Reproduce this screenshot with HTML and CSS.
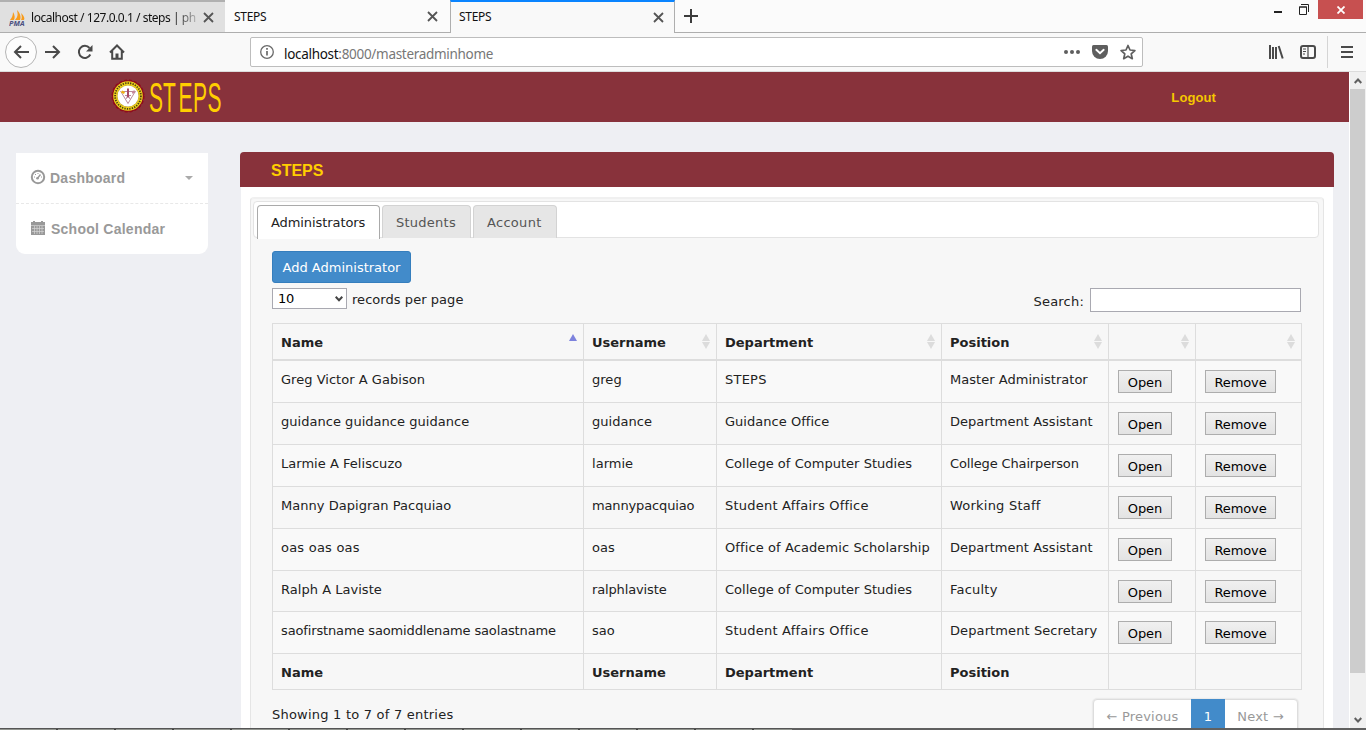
FILE: index.html
```
<!DOCTYPE html>
<html lang="en">
<head>
<meta charset="utf-8">
<title>STEPS</title>
<link rel="stylesheet" href="styles.css">
</head>
<body>
<div class="window">
  <div class="tabstrip">
    <div class="tab tab-pma">
      <svg class="favicon" width="16" height="16" viewBox="0 0 16 16"><path d="M1 10C3 8 4 5 4 2c2 3 2 6 1 8zM6 10c3-3 3-6 2-10 4 4 4 8 3 10zM12 10c1-2 1-4 0-7 3 3 4 5 3 7z" fill="#f89c1c"/><text x="0" y="15.500" font-size="6.500" textLength="15.500" lengthAdjust="spacingAndGlyphs" font-weight="bold" font-style="italic" fill="#4a5080">PMA</text></svg>
      <span class="tab-title faded">localhost / 127.0.0.1 / steps | ph</span>
      <svg class="x" width="11" height="11" viewBox="0 0 11 11"><path d="M1 1l9 9M10 1l-9 9"/></svg>
    </div>
    <div class="tab"><span class="tab-title">STEPS</span><svg class="x" width="11" height="11" viewBox="0 0 11 11"><path d="M1 1l9 9M10 1l-9 9"/></svg></div>
    <div class="tab tab-active"><span class="tab-title">STEPS</span><svg class="x" width="11" height="11" viewBox="0 0 11 11"><path d="M1 1l9 9M10 1l-9 9"/></svg></div>
    <div class="strip-rest">
      <svg class="plus" width="14" height="14" viewBox="0 0 14 14"><path d="M7 0v14M0 7h14" stroke="#3c3c3c" stroke-width="2"/></svg>
      <div class="win-controls">
        <svg width="8" height="14" viewBox="0 0 8 14"><path d="M0 12h8" stroke="#222" stroke-width="2"/></svg>
        <svg class="restore" width="10" height="11" viewBox="0 0 10 11"><path d="M.5 3h7v7.500h-7zM0 3h8M2 .5h7.500V8" fill="none" stroke="#222"/></svg>
        <span class="win-close"><svg width="8" height="8" viewBox="0 0 8 8"><path d="M.5 .5l7 7M7.500 .5l-7 7" stroke="#fff" stroke-width="1.800"/></svg></span>
      </div>
    </div>
  </div>
  <div class="toolbar">
    <span class="back"><svg width="16" height="14" viewBox="0 0 16 14"><path d="M16 7H2M8 1L2 7l6 6"/></svg></span>
    <svg class="fwd" width="16" height="14" viewBox="0 0 16 14"><path d="M0 7h14M8 1l6 6-6 6"/></svg>
    <svg class="reload" width="16" height="16" viewBox="0 0 16 16"><path d="M13.300 10.500A6 6 0 1 1 12.500 4"/><path d="M15.500 1v6.500H9z" class="solid"/></svg>
    <svg class="home" width="16" height="16" viewBox="0 0 16 16"><path d="M1 8.500L8 1.500l7 7M3.200 7v7.800h9.600V7" /><path d="M6.500 15V9.500h3V15z" class="solid"/></svg>
    <div class="urlbar">
      <svg width="14" height="14" viewBox="0 0 14 14"><circle cx="7" cy="7" r="6.300" fill="none" stroke="#6a6a6a" stroke-width="1.300"/><path d="M7 6v4.500M7 3v1.700" stroke="#6a6a6a" stroke-width="1.700"/></svg>
      <span class="url">localhost<span>:8000/masteradminhome</span></span>
      <svg class="dots" width="16" height="4" viewBox="0 0 16 4"><circle cx="2" cy="2" r="2"/><circle cx="8" cy="2" r="2"/><circle cx="14" cy="2" r="2"/></svg>
      <svg class="pocket" width="16" height="14" viewBox="0 0 16 14"><path d="M1.500 0h13Q16 0 16 1.500V6a8 8 0 0 1-16 0V1.500Q0 0 1.500 0z" fill="#5e5e5e"/><path d="M4.300 4.800L8 8.300l3.700-3.500" fill="none" stroke="#fff" stroke-width="1.900" stroke-linecap="round"/></svg>
      <svg width="16" height="16" viewBox="0 0 16 16"><path d="M8 1.500l2 4.500 4.900.5-3.700 3.300 1.100 4.900L8 12.200l-4.300 2.500 1.100-4.900L1.100 6.500 6 6z" fill="none" stroke="#5e5e5e" stroke-width="1.700" stroke-linejoin="round"/></svg>
    </div>
    <div class="tools">
      <svg width="16" height="14" viewBox="0 0 16 14"><path d="M2 0v14M5 2v12M8 2v12M10.700 1l4 12.500"/></svg>
      <svg class="side" width="16" height="14" viewBox="0 0 16 14"><rect x="1" y="1" width="14" height="12" rx="2"/><path d="M8 1v12M3 4h3M3 6.500h3M3 9h2" stroke-width="1.200"/></svg>
      <span class="sep"></span>
      <svg width="12" height="12" viewBox="0 0 12 12"><path d="M0 1h12M0 6h12M0 11h12"/></svg>
    </div>
  </div>

  <div class="viewport">
    <div class="page">
      <header class="site-header">
        <svg class="brand" width="120" height="40" viewBox="0 0 120 40">
          <circle cx="17" cy="17" r="15.800" fill="#8f0b1c" stroke="#8f0b1c" stroke-width="1.500" stroke-dasharray="3 2"/>
          <circle cx="17" cy="17" r="12.800" fill="#b9962a" stroke="#ecd21c" stroke-width="4"/>
          <circle cx="17" cy="17" r="12.900" fill="none" stroke="#4c3b12" stroke-width="1.800" stroke-dasharray="1.300 1.200"/>
          <circle cx="17" cy="17" r="10.500" fill="#fff"/>
          <path d="M9.500 12l7.500 12.500L24.500 12M12 12.500h10M14 16.500h6M15 20l2-4 2 4" fill="none" stroke="#b98a9a" stroke-width="1"/>
          <path d="M17 9.500v9" stroke="#a84a66" stroke-width="2"/>
          <path d="M10.500 12.500l3 1.500" stroke="#f0b010" stroke-width="2.500"/><path d="M21 13.500l3-1" stroke="#c6889b" stroke-width="2.500"/>
        <text class="logo-text" transform="translate(38 32.500) scale(.5 1)" x="0 28 59 88 117">STEPS</text>
        </svg>
        <a class="logout">Logout</a>
      </header>
      <div class="layout">
        <nav class="sidebar">
          <a class="side-item"><svg class="dash" width="16" height="16" viewBox="0 0 16 16"><circle cx="8" cy="8" r="6.200" fill="none" stroke="#999" stroke-width="2"/><path d="M7.300 9.500L10.500 5.500" stroke="#999" stroke-width="1.400"/><circle cx="7.500" cy="9.200" r="1.300" fill="#999"/><path d="M4 8h1M5 5.500h1M7.500 4.500h1M11 8h1" stroke="#999"/></svg><span>Dashboard</span><i class="caret"></i></a>
          <a class="side-item"><svg class="cal" width="14" height="14" viewBox="0 0 14 14"><path d="M0 1h14v13H0zM2 0h2v2H2zM10 0h2v2h-2z" fill="#999"/><path d="M0 4.500h14M1 7.500h12M1 10.500h12M3.500 5v8M6 5v8M8.500 5v8M11 5v8" stroke="#d6d6d6" stroke-width=".7"/></svg><span>School Calendar</span></a>
        </nav>
        <main class="panel">
          <h1 class="panel-title">STEPS</h1>
          <div class="panel-body">
            <div class="well">
              <div class="nav-tabs"><a class="nav-tab current">Administrators</a><a class="nav-tab students">Students</a><a class="nav-tab account">Account</a></div>
              <div class="content">
                <button class="add">Add Administrator</button>
                <div class="controls">
                  <div class="length"><span class="select">10<svg width="8" height="6" viewBox="0 0 8 6"><path d="M.7 .8L4 4.300 7.300 .8" fill="none" stroke="#444" stroke-width="2"/></svg></span>records per page</div>
                  <label class="search">Search:<input type="text"></label>
                </div>
                <table class="grid">
                  <colgroup><col class="c1"><col class="c2"><col class="c3"><col class="c4"><col class="c5"><col class="c6"></colgroup>
                  <thead><tr><th>Name<i class="up"></i></th><th>Username<i class="both"></i></th><th>Department<i class="both"></i></th><th>Position<i class="both"></i></th><th><i class="both"></i></th><th><i class="both"></i></th></tr></thead>
                  <tbody>
                    <tr class="first"><td>Greg Victor A Gabison</td><td>greg</td><td class="wide">STEPS</td><td>Master Administrator</td><td><button>Open</button></td><td><button>Remove</button></td></tr>
                    <tr><td>guidance guidance guidance</td><td>guidance</td><td>Guidance Office</td><td>Department Assistant</td><td><button>Open</button></td><td><button>Remove</button></td></tr>
                    <tr><td>Larmie A Feliscuzo</td><td>larmie</td><td>College of Computer Studies</td><td class="tight">College Chairperson</td><td><button>Open</button></td><td><button>Remove</button></td></tr>
                    <tr><td>Manny Dapigran Pacquiao</td><td class="tight">mannypacquiao</td><td class="wide">Student Affairs Office</td><td class="wide">Working Staff</td><td><button>Open</button></td><td><button>Remove</button></td></tr>
                    <tr><td class="wide">oas oas oas</td><td>oas</td><td class="loose">Office of Academic Scholarship</td><td>Department Assistant</td><td><button>Open</button></td><td><button>Remove</button></td></tr>
                    <tr class="short"><td>Ralph A Laviste</td><td class="tight">ralphlaviste</td><td>College of Computer Studies</td><td class="wide">Faculty</td><td><button>Open</button></td><td><button>Remove</button></td></tr>
                    <tr><td class="tight">saofirstname saomiddlename saolastname</td><td>sao</td><td class="wide">Student Affairs Office</td><td class="loose">Department Secretary</td><td><button>Open</button></td><td><button>Remove</button></td></tr>
                  </tbody>
                  <tfoot><tr><th>Name</th><th>Username</th><th>Department</th><th>Position</th><th></th><th></th></tr></tfoot>
                </table>
                <div class="bottom">
                  <span class="info">Showing 1 to 7 of 7 entries</span>
                  <div class="pager"><a>← Previous</a><a class="on">1</a><a>Next →</a></div>
                </div>
              </div>
            </div>
          </div>
        </main>
      </div>
    </div>
    <div class="scrollbar">
      <span class="arrow"><svg width="8" height="6" viewBox="0 0 8 6"><path d="M.7 5L4 1.500 7.300 5"/></svg></span>
      <span class="thumb"></span>
      <span class="arrow down"><svg width="8" height="6" viewBox="0 0 8 6"><path d="M.7 1L4 4.500 7.300 1"/></svg></span>
    </div>
  </div>
  <div class="taskbar"><span></span></div>
</div>
</body>
</html>
```
FILE: styles.css
```
* { box-sizing: border-box; }
body { margin: 0; font: 13px/20px "DejaVu Sans", Verdana, sans-serif; color: #222; }
svg { display: block; flex: none; }
.window { width: 1366px; height: 730px; overflow: hidden; display: flex; flex-direction: column; }

/* browser tabs */
.tabstrip { display: flex; height: 33px; flex: none; background: #fbfbfb; font: 12px/16px "Noto Sans", sans-serif; color: #111; }
.tab { width: 225px; display: flex; align-items: center; padding: 2px 12px 1px 9px; border-bottom: 1px solid #aeaeae; }
.tab-pma { background: #e0e0e0; border-top: 2px solid #b0b0b0; padding: 1px 11px 0 9px; }
.favicon { margin-right: 6px; }
.tab-title { flex: 1; letter-spacing: -.3px; white-space: nowrap; }
.tab-title.faded { flex: none; width: 166px; margin-right: 6px; letter-spacing: -.47px; -webkit-mask-image: linear-gradient(90deg, #000 86%, rgba(0,0,0,.2)); mask-image: linear-gradient(90deg, #000 86%, rgba(0,0,0,.2)); }
.x { fill: none; stroke: #555; stroke-width: 1.8; }
.tab-active { border: 1px solid #aeaeae; border-top: 2px solid #0a84ff; border-bottom: 0; background: #f9f9f9; padding: 0 10px 1px 8px; }
.strip-rest { flex: 1; display: flex; justify-content: space-between; align-items: flex-start; border-bottom: 1px solid #aeaeae; }
.plus { margin: 9px 0 0 9px; }
.win-controls { display: flex; align-items: flex-start; }
.restore { margin: 4px 9px 0 17px; }
.win-close { width: 45px; height: 19px; background: #c75050; display: flex; align-items: center; justify-content: center; margin-right: 3px; }

/* toolbar */
.toolbar { height: 39px; flex: none; background: #f9f9f9; border-bottom: 1px solid #dcdcdc; display: flex; align-items: center; padding-left: 5px; fill: none; stroke: #4a4a4a; stroke-width: 2; }
.solid { fill: #4a4a4a; stroke: none; }
.back { width: 32px; height: 32px; border: 1px solid #b5b5b5; border-radius: 50%; background: #fdfdfd; display: flex; align-items: center; justify-content: center; }
.fwd { margin-left: 8px; }
.reload { margin-left: 16px; }
.home { margin-left: 16px; }
.urlbar { margin-left: 125px; width: 893px; height: 30px; border: 1px solid #bdbdbd; background: #fff; border-radius: 2px; display: flex; align-items: center; padding: 0 6px 0 9px; stroke: none; }
.url { flex: 1; margin-left: 10px; font: 13.500px/18px "Noto Sans", sans-serif; color: #111; letter-spacing: -.3px; padding-top: 3px; }
.url span { color: #777; }
.dots { fill: #5e5e5e; }
.pocket { margin: 0 12px; }
.tools { display: flex; align-items: center; margin-left: 125px; }
.side { margin: 0 11px 0 16px; }
.sep { width: 1px; height: 32px; background: #d5d5d5; margin-right: 13px; }

/* page */
.viewport { display: flex; flex: 1; min-height: 0; }
.page { width: 1349px; background: #eeeff3; overflow: hidden; }
.site-header { height: 50px; background: #88323b; display: flex; justify-content: space-between; padding: 7px 133px 0 111px; }
.logo-text { font: 42px "Liberation Sans", sans-serif; fill: #ffce00; }
.logout { font: bold 13px/20px "Liberation Sans", sans-serif; color: #f6c700; padding-top: 9px; letter-spacing: .1px; }
.layout { display: flex; align-items: flex-start; padding: 30px 15px 0 16px; }
.sidebar { width: 192px; margin-top: 1px; background: #fff; border-radius: 0 0 9px 9px; color: #999; font: bold 14px/20px "Liberation Sans", sans-serif; letter-spacing: .25px; }
.side-item { height: 50px; display: flex; align-items: center; padding: 0 15px 0 14px; }
.side-item + .side-item { border-top: 1px dashed #e8e8e8; height: 51px; }
.side-item span { margin-left: 4px; flex: 1; }
.dash { margin-bottom: 2px; }
.cal { margin: 0 2px 2px 1px; }
.caret { border: 4px solid transparent; border-top-color: #aaa; border-bottom: 0; }
.panel { width: 1094px; margin-left: 32px; }
.panel-title { margin: 0; height: 35px; padding-left: 31px; border-radius: 4px 4px 0 0; background: #88323b; color: #ffce00; font: bold 16px/37px "Liberation Sans", sans-serif; }
.panel-body { margin: 0 1px; background: #fff; padding: 10px 9px 0; }
.well { height: 600px; background: #f7f7f7; border: 1px solid #e5e5e5; border-top-color: #f0f0f0; border-radius: 4px; padding: 3px 2px 0; box-shadow: inset 0 1px 1px rgba(0,0,0,.03); }
.nav-tabs { height: 37px; width: 1066px; background: #fff; border: 1px solid #e3e3e3; border-radius: 4px; display: flex; gap: 2px; padding: 3px 0 0 3px; }
.nav-tab { height: 33px; border: 1px solid #d3d3d3; border-bottom: 0; border-radius: 4px 4px 0 0; background: #e6e6e6; color: #555; padding: 0 13px; line-height: 33px; }
.nav-tab.current { width: 123px; background: #fff; border-color: #aaa; color: #222; letter-spacing: -.08px; height: 34px; }
.students { width: 89px; letter-spacing: .25px; }
.account { width: 84px; letter-spacing: .3px; }
.content { padding: 13px 0 0 19px; width: 1049px; }
button { font: inherit; }
.add { display: block; height: 32px; width: 139px; padding: 2px 0 0; color: #fff; background: #428bca; border: 1px solid #357ebd; border-radius: 3px; }
.controls { display: flex; justify-content: space-between; height: 40px; padding-top: 5px; }
.length, .search { display: flex; align-items: flex-start; line-height: 24px; letter-spacing: .05px; }
.select { width: 75px; height: 21px; line-height: 22px; border: 1px solid #a9a9b1; background: #fff; padding: 0 3px 0 5px; margin-right: 5px; display: flex; justify-content: space-between; align-items: center; color: #000; letter-spacing: -.3px; }
.search { line-height: 27px; margin-right: 1px; letter-spacing: .2px; }
.search input { width: 211px; height: 24px; margin: 0 0 0 6px; border: 1px solid #a9a9b1; padding: 0; }
.grid { width: 1030px; table-layout: fixed; border-spacing: 0; border-right: 1px solid #ddd; border-bottom: 1px solid #ddd; }
.c1 { width: 311px; } .c2 { width: 133px; } .c3 { width: 225px; } .c4 { width: 167px; } .c5 { width: 87px; }
.grid th, .grid td { padding: 0 0 0 8px; border-left: 1px solid #ddd; border-top: 1px solid #ddd; white-space: nowrap; text-align: left; }
.grid td { vertical-align: top; padding-top: 9px; height: 42px; letter-spacing: .03px; }
.grid .tight { letter-spacing: -.14px; }
.grid .loose { letter-spacing: .1px; }
.grid .wide { letter-spacing: .22px; }
.grid thead th { height: 36px; position: relative; padding-top: 2px; }
.grid .first td { border-top-width: 2px; height: 43px; }
.grid .short td { height: 41px; }
.grid tbody tr:nth-child(odd) { background: #f9f9f9; }
.grid tfoot th { height: 36px; padding-top: 2px; }
.grid td button { display: block; width: 54px; height: 23px; padding: 2px 0 0; line-height: 19px; color: #000; border: 1px solid #adadad; background: linear-gradient(#f0f0f0, #e3e3e3); margin-left: 1px; letter-spacing: -.1px; }
.grid td:last-child button { width: 71px; }
.up, .both::before, .both::after { content: ""; position: absolute; right: 6px; top: 10px; border: 4.500px solid transparent; border-top: 0; border-bottom: 7px solid #7d82dd; }
.both::before { border-bottom-color: #dcdcdc; }
.both::after { top: 18px; border-top: 7px solid #dcdcdc; border-bottom: 0; }
.bottom { display: flex; justify-content: space-between; padding: 9px 4px 0 0; }
.info { padding-top: 6px; letter-spacing: .22px; }
.pager { display: flex; width: 205px; height: 36px; border: 1px solid #ddd; border-radius: 4px; background: #fff; color: #999; line-height: 33px; box-shadow: 0 0 1px 1px #e9e9e9; letter-spacing: .2px; }
.pager a { width: 97px; text-align: center; }
.pager a.on { width: 34px; background: #428bca; color: #fff; margin-top: -1px; line-height: 35px; }
.pager a:last-child { width: 71px; }

.scrollbar { width: 17px; background: #f0f0f0; border-left: 1px solid #fff; display: flex; flex-direction: column; padding-right: 1px; fill: none; stroke: #606060; stroke-width: 2; }
.arrow { height: 17px; display: flex; align-items: center; justify-content: center; }
.thumb { height: 584px; background: #cdcdcd; }
.down { margin-top: auto; }
.taskbar { height: 2px; flex: none; background: #606060; }
.taskbar span { display: block; width: 792px; height: 2px; border-top: 1px solid #555; background: repeating-linear-gradient(90deg, #92958f 0 56px, #444 56px 58px); }
```
